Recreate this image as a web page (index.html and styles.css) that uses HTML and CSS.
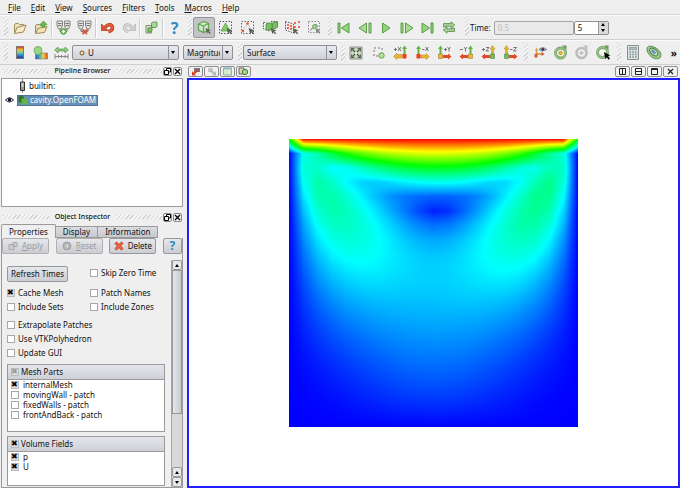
FILE: index.html
```html
<!DOCTYPE html>
<html lang="en">
<head>
    <meta charset="UTF-8">
    <meta name="viewport" content="width=device-width, initial-scale=1.0">
    <title>ParaView</title>
    <link rel="stylesheet" href="styles.css">
</head>
<body>
    <nav class="menubar">
        <a href="#"><u>F</u>ile</a>
        <a href="#"><u>E</u>dit</a>
        <a href="#"><u>V</u>iew</a>
        <a href="#"><u>S</u>ources</a>
        <a href="#"><u>F</u>ilters</a>
        <a href="#"><u>T</u>ools</a>
        <a href="#"><u>M</u>acros</a>
        <a href="#"><u>H</u>elp</a>
    </nav>

    <div class="toolbar">
        <div class="group">
            <span class="handle"></span>
            <button class="tool" title="Open"><svg width="14" height="14" viewBox="0 0 14 14"><path d="M1.500 12V4l1-1.500h3l1 1h4v2" fill="#efe3c0" stroke="#a08a55"/><path d="M1.500 12.500L4 6.500l9-2.500-2.500 7z" fill="#f8edc8" stroke="#a08a55"/></svg></button>
            <button class="tool" title="Save Data"><svg width="14" height="14" viewBox="0 0 14 14"><path d="M1.500 12V5l1-1.500h3l1 1h4v2" fill="#e8dcb8" stroke="#a08a55"/><path d="M1.500 12.500L4 7.500l9-2-2.500 6z" fill="#f3e3ae" stroke="#a08a55"/><path d="M8 6V3.500H6L9.500 0 13 3.500h-2V6z" fill="#6cc04a" stroke="#3f8f2c" stroke-width=".6"/></svg></button>
            <span class="sep"></span>
            <button class="tool" title="Connect"><svg width="15" height="15" viewBox="0 0 15 15"><path d="M1 1h5.500v4.500L5 9H2.500L1 5.500zM8.500 1H14v4.500L12.500 9H10L8.500 5.500z" fill="#e4e4de" stroke="#85857d"/><path d="M2 3.500h3.500M9.500 3.500H13M2 5.500h3.500M9.500 5.500H13M4 9v2.500h2M11 9v2.500H9" stroke="#777" fill="none"/><circle cx="7.500" cy="11.500" r="2.800" fill="#8ccc70" stroke="#4d9440"/><path d="M6 11.500h3M7.500 10v3" stroke="#fff"/></svg></button>
            <button class="tool" title="Disconnect"><svg width="15" height="15" viewBox="0 0 15 15"><path d="M1 1h5.500v4.500L5 9H2.500L1 5.500zM8.500 1H14v4.500L12.500 9H10L8.500 5.500z" fill="#e4e4de" stroke="#85857d"/><path d="M2 3.500h3.500M9.500 3.500H13M2 5.500h3.500M9.500 5.500H13M4 9v2.500h2M11 9v2.500H9" stroke="#777" fill="none"/><path d="M5.500 9.500l4.500 4.500M10 9.500L5.500 14" stroke="#d9573f" stroke-width="2"/></svg></button>
            <span class="sep"></span>
            <button class="tool" title="Undo"><svg width="14" height="14" viewBox="0 0 14 14"><path d="M4 6.500C7 2.500 11 3 11.500 6.500c0 2-1.500 3.500-4 4" fill="none" stroke="#a43418" stroke-width="3.500"/><path d="M.5 3v6.500H7z" fill="#e2532f" stroke="#a43418" stroke-width=".7"/><path d="M4 6.500C7 2.500 11 3 11.500 6.500c0 2-1.500 3.500-4 4" fill="none" stroke="#e65b38" stroke-width="2.200"/></svg></button>
            <button class="tool" title="Redo"><svg width="14" height="14" viewBox="0 0 14 14"><path d="M10 6.500C7 2.500 3 3 2.500 6.500c0 2 1.500 3.500 4 4" fill="none" stroke="#b2b2b2" stroke-width="3"/><path d="M13.500 3v6.500H7z" fill="#d2d2d2" stroke="#b2b2b2" stroke-width=".7"/><path d="M10 6.500C7 2.500 3 3 2.500 6.500c0 2 1.500 3.500 4 4" fill="none" stroke="#dcdcdc" stroke-width="1.600"/></svg></button>
            <span class="sep"></span>
            <button class="tool" title="Find Data"><svg width="13" height="13" viewBox="0 0 13 13"><path d="M1 4.500h5.500v7.500H1z" fill="#cfe2c5" stroke="#7c9270"/><path d="M6.500 2l1.500-1h4v4.500l-1 1H6.500z" fill="#a7d796" stroke="#4f8f40" stroke-width=".8"/><path d="M3 7h2.500l1.500-1v3.500L5.500 11H3z" fill="#83cb69" stroke="#3f7f30" stroke-width=".8"/></svg></button>
            <span class="sep"></span>
            <button class="tool help" title="Help">?</button>
        </div>
        <div class="group selection">
            <span class="handle"></span>
            <button class="tool pressed" title="Interact"><svg width="15" height="15" viewBox="0 0 15 15"><path d="M1.500 4L6.500 1.500l5 2V10l-5 2.500-5-2.500z" fill="#d2e6ca" stroke="#62a850" stroke-width="1.300"/><path d="M1.500 4l5 2 5-2.500M6.500 6v6.500" fill="none" stroke="#62a850" stroke-width="1.300"/><path d="M8.500 8l5.500 2.200-2.200.8 2 2-1 1-2-2-.8 2z" fill="#5d6855"/></svg></button>
            <button class="tool" title="Select Cells On"><svg width="16" height="16" viewBox="0 0 16 16"><path d="M1.500 1.500h12v12h-12z" fill="none" stroke="#555" stroke-dasharray="1.500 1.500"/><path d="M7.500 3l4.500 8H3z" fill="#86c970" stroke="#4c9b3b" stroke-width=".7"/><path d="M8.500 8l6 2.500-2.300.8 2 2-1 1-2-2-.8 2z" fill="#56614f"/></svg></button>
            <button class="tool" title="Select Points On"><svg width="16" height="16" viewBox="0 0 16 16"><path d="M1.500 1.500h12v12h-12z" fill="none" stroke="#666" stroke-dasharray="1.500 1.500"/><path d="M7.500 3.500L3 11M7.500 3.500L11 9" stroke="#ccc"/><circle cx="7.500" cy="3.500" r="1.200" fill="#e8512f"/><circle cx="3" cy="11" r="1.200" fill="#e8512f"/><path d="M8.500 8l6 2.500-2.300.8 2 2-1 1-2-2-.8 2z" fill="#56614f"/></svg></button>
            <button class="tool" title="Select Cells Through"><svg width="17" height="16" viewBox="0 0 17 16"><path d="M1.500 2l6 2v7l-6-2zM9 1.500h6.500v7" fill="none" stroke="#555" stroke-dasharray="1.500 1.200"/><path d="M4 4.500l2-1.500h4v6l-1 1H4zM10.500 3.500l1-1.500h4v5l-1.500 1.500h-3.500z" fill="#79c163" stroke="#468836" stroke-width=".7"/><path d="M8.500 8l6 2.500-2.300.8 2 2-1 1-2-2-.8 2z" fill="#56614f"/></svg></button>
            <button class="tool" title="Select Points Through"><svg width="17" height="16" viewBox="0 0 17 16"><path d="M1.500 1.500l8 2.500v9l-8-3z" fill="none" stroke="#555" stroke-dasharray="1.500 1.200"/><g fill="#e8452b"><circle cx="4" cy="5" r="1"/><circle cx="7" cy="6" r="1"/><circle cx="4" cy="8" r="1"/><circle cx="7" cy="9" r="1"/><circle cx="11" cy="3" r="1"/><circle cx="15" cy="2" r="1"/><circle cx="15" cy="7" r="1"/><circle cx="11" cy="7" r="1"/></g><path d="M8.500 8l6 2.500-2.300.8 2 2-1 1-2-2-.8 2z" fill="#56614f"/></svg></button>
            <button class="tool" title="Select Block"><svg width="15" height="15" viewBox="0 0 15 15"><path d="M1.500 1.500h11v11h-11z" fill="none" stroke="#888" stroke-dasharray="1.500 1.500"/><path d="M3 11l2-3 2 1M9 4l2 3" stroke="#888" fill="none"/><circle cx="7.500" cy="6.500" r="2" fill="#a6d596" stroke="#6ba45d"/><path d="M8.500 8l5 2-2.200.8 2 2-1 1-2-2-.8 2z" fill="#7f8779"/></svg></button>
        </div>
        <div class="group vcr">
            <span class="handle"></span>
            <button class="tool" title="First Frame"><svg width="13" height="12" viewBox="0 0 13 12"><path d="M1 1h2v10H1zM12 1v10L4.500 6z" fill="#90d676" stroke="#5a9a4a"/></svg></button>
            <button class="tool" title="Previous Frame"><svg width="14" height="12" viewBox="0 0 14 12"><path d="M11 1h2v10h-2zM8.500 1v10L1 6z" fill="#a6dd90" stroke="#5a9a4a"/></svg></button>
            <button class="tool" title="Play"><svg width="10" height="12" viewBox="0 0 10 12"><path d="M1.500 1v10L9 6z" fill="#90d676" stroke="#5a9a4a"/></svg></button>
            <button class="tool" title="Next Frame"><svg width="14" height="12" viewBox="0 0 14 12"><path d="M1 1h2v10H1zM5.500 1v10L13 6z" fill="#a6dd90" stroke="#5a9a4a"/></svg></button>
            <button class="tool" title="Last Frame"><svg width="13" height="12" viewBox="0 0 13 12"><path d="M10 1h2v10h-2zM1 1v10L8.500 6z" fill="#90d676" stroke="#5a9a4a"/></svg></button>
            <button class="tool" title="Loop"><svg width="14" height="13" viewBox="0 0 14 13"><path d="M1.500 6V2.500H9V.8L12.800 4 9 7V5.200H4V6zM12.500 7v3.500H5v1.700L1.200 9 5 6v1.800h5V7z" fill="#a9cf99" stroke="#5b8b4b" stroke-width=".8"/></svg></button>
        </div>
        <div class="group time">
            <span class="handle"></span>
            <label for="time">Time:</label>
            <input type="text" id="time" class="time-value" value="0.5" disabled>
            <div class="spin">
                <input type="text" id="timestep" aria-label="Time step" value="5">
                <div class="spin-buttons">
                    <button title="Up"><i class="arrow up"></i></button>
                    <button title="Down"><i class="arrow down"></i></button>
                </div>
            </div>
        </div>
    </div>

    <div class="toolbar">
        <div class="group">
            <span class="handle"></span>
            <button class="tool" title="Color Legend"><span class="legend"></span></button>
            <button class="tool" title="Edit Color Map"><svg width="15" height="14" viewBox="0 0 15 14"><defs><linearGradient id="rainbow"><stop offset="0" stop-color="#2856b8"/><stop offset=".35" stop-color="#3eb6c0"/><stop offset=".65" stop-color="#f4d03a"/><stop offset="1" stop-color="#d85020"/></linearGradient></defs><path d="M2.500 8.500h5v-1.500h7v6h-12z" fill="url(#rainbow)" stroke="#777" stroke-width=".6"/><circle cx="5" cy="4.500" r="4" fill="#9ad585" stroke="#63a852" stroke-width=".8"/></svg></button>
            <button class="tool" title="Rescale"><svg width="15" height="14" viewBox="0 0 15 14"><path d="M.7 4L4 1v2h7V1l3.300 3L11 7V5H4v2z" fill="#8fce7b" stroke="#55944a" stroke-width=".7"/><path d="M1 8v5M14 8v5M1 10.500h13M4.500 9v3M7.500 9v3M11 9v3" stroke="#888" fill="none"/></svg></button>
            <div class="combo variable">
                <svg class="point" width="6" height="6" viewBox="0 0 6 6"><circle cx="3" cy="3" r="2" fill="#fbe6b4" stroke="#6e5120"/></svg>
                <select aria-label="Variable"><option>U</option><option>p</option></select>
            </div>
            <div class="combo component">
                <select aria-label="Component"><option>Magnitude</option></select>
            </div>
        </div>
        <div class="group representation">
            <span class="handle"></span>
            <div class="combo surface">
                <select aria-label="Representation"><option>Surface</option><option>Wireframe</option></select>
            </div>
        </div>
        <div class="group camera">
            <span class="handle"></span>
            <button class="tool" title="Reset"><svg width="14" height="14" viewBox="0 0 14 14"><path d="M1 1h12v12H1z" fill="#cbd6c5" stroke="#777" stroke-width=".8"/><path d="M4 4l6 6M10 4l-6 6" stroke="#455040" stroke-width="1.200"/><path d="M2 2h4L2 6zM12 2v4L8 2zM2 12V8l4 4zM12 12H8l4-4z" fill="#5c6e52"/><circle cx="7" cy="7" r="1.500" fill="#e4eedf"/></svg></button>
            <button class="tool" title="Zoom To Box"><svg width="13" height="13" viewBox="0 0 13 13"><path d="M2 2h8v8H2z" fill="none" stroke="#777" stroke-dasharray="2 2"/><circle cx="9.500" cy="9.500" r="2.700" fill="#b8e1a8" stroke="#60a74c"/></svg></button>
            <button class="tool" title="+X"><svg width="15" height="15" viewBox="0 0 15 15"><path d="M10.500 9V4H9l2.500-3.500L14 4h-1.500v5z" fill="#62b548"/><path d="M9 11v-1.500H4V8L.5 11.500 4 14.500V13h5z" fill="#e9b52e" stroke="#9f7a22" stroke-width=".4"/><path d="M9.500 9h4v4.500h-4z" fill="#f03c14"/><path d="M1 4.500h3M2.500 3v3M5 2l3 4M8 2L5 6" stroke="#555" stroke-width=".8"/></svg></button>
            <button class="tool" title="-X"><svg width="15" height="15" viewBox="0 0 15 15"><path d="M2.500 9V4H1l2.500-3.500L6 4H4.500v5z" fill="#62b548"/><path d="M6 10h5V8.500l3.500 3-3.500 3V13H6z" fill="#e9b52e" stroke="#9f7a22" stroke-width=".4"/><path d="M1.500 9h4v4.500h-4z" fill="#f03c14"/><path d="M7 4.500h2.500M10.500 2l3 4M13.500 2l-3 4" stroke="#555" stroke-width=".8"/></svg></button>
            <button class="tool" title="+Y"><svg width="15" height="15" viewBox="0 0 15 15"><path d="M2.500 9V4H1l2.500-3.500L6 4H4.500v5z" fill="#62b548"/><path d="M6 10h5V8.500l3.500 3-3.500 3V13H6z" fill="#e2492b"/><path d="M1.500 9h4v4.500h-4z" fill="#efb52c" stroke="#97701a" stroke-width=".5"/><path d="M7 4.500h3M8.500 3v3M10.500 2L12 4l1.500-2M12 4v2.500" fill="none" stroke="#555" stroke-width=".8"/></svg></button>
            <button class="tool" title="-Y"><svg width="15" height="15" viewBox="0 0 15 15"><path d="M10.500 9V4H9l2.500-3.500L14 4h-1.500v5z" fill="#62b548"/><path d="M9 10H4V8.500l-3.500 3 3.500 3V13h5z" fill="#e2492b"/><path d="M9.500 9h4v4.500h-4z" fill="#efb52c" stroke="#97701a" stroke-width=".5"/><path d="M1 4.500h3M5 2l1.500 2L8 2M6.500 4v2.500" fill="none" stroke="#555" stroke-width=".8"/></svg></button>
            <button class="tool" title="+Z"><svg width="15" height="15" viewBox="0 0 15 15"><path d="M10.500 9V4H9l2.500-3.500L14 4h-1.500v5z" fill="#e9b52e" stroke="#9f7a22" stroke-width=".4"/><path d="M9 10H4V8.500l-3.500 3 3.500 3V13h5z" fill="#e2492b"/><path d="M9.500 9h4v4.500h-4z" fill="#74b957" stroke="#4a7c34" stroke-width=".5"/><path d="M1 4.500h3M2.500 3v3M5 2.500h3L5 6h3" fill="none" stroke="#555" stroke-width=".8"/></svg></button>
            <button class="tool" title="-Z"><svg width="15" height="15" viewBox="0 0 15 15"><path d="M2.500 9V4H1l2.500-3.500L6 4H4.500v5z" fill="#e9b52e" stroke="#9f7a22" stroke-width=".4"/><path d="M6 10h5V8.500l3.500 3-3.500 3V13H6z" fill="#e2492b"/><path d="M1.500 9h4v4.500h-4z" fill="#74b957" stroke="#4a7c34" stroke-width=".5"/><path d="M7 4.500h2.500M10.500 2.500h3l-3 3.500h3" fill="none" stroke="#555" stroke-width=".8"/></svg></button>
        </div>
        <div class="group center">
            <span class="handle"></span>
            <button class="tool" title="Show Orientation Axes"><svg width="14" height="13" viewBox="0 0 14 13"><path d="M3.500 8V4" stroke="#c9a040" stroke-width="1.600"/><path d="M2 4.500L3.500 1.500 5 4.500z" fill="#c9a040"/><path d="M3.500 8h6" stroke="#d6952c" stroke-width="1.600"/><path d="M8.500 6l3 2-3 2z" fill="#d05030"/><path d="M1.500 8h3v3.500h-3z" fill="#d8583a"/><path d="M6 3.500q3.500-3.500 7.500 0-4 3-7.500 0z" fill="#eef" stroke="#667"/><circle cx="9.800" cy="3.300" r="1.400" fill="#335"/></svg></button>
            <button class="tool" title="Show Center"><svg width="15" height="15" viewBox="0 0 15 15"><circle cx="7.500" cy="8" r="5" fill="#f6f6ee" stroke="#6a9a58" stroke-width="2.800"/><circle cx="7.500" cy="8" r="5" fill="none" stroke="#9cc48b" stroke-width="1.600"/><path d="M9 .5h4.500V5z" fill="#6a9a58"/><circle cx="7.500" cy="8" r="1.800" fill="#f2b826" stroke="#a0781a" stroke-width=".6"/></svg></button>
            <button class="tool" title="Reset Center" disabled><svg width="15" height="15" viewBox="0 0 15 15"><circle cx="7.500" cy="8" r="5" fill="#eee" stroke="#bdbdbd" stroke-width="2.600"/><path d="M9 .5h4.500V5z" fill="#bdbdbd"/><path d="M5.500 8h4M7.500 6v4" stroke="#bdbdbd" stroke-width="1.500"/></svg></button>
            <button class="tool" title="Pick Center"><svg width="16" height="15" viewBox="0 0 16 15"><circle cx="7.500" cy="7.500" r="5" fill="#f6f6ee" stroke="#6a9a58" stroke-width="2.800"/><circle cx="7.500" cy="7.500" r="5" fill="none" stroke="#9cc48b" stroke-width="1.600"/><path d="M9 .5h4.500V5z" fill="#6a9a58"/><path d="M9 7l6.500 3.500-2.500.6 2 2.400-1.300 1.200-2-2.500-1.400 2z" fill="#000"/></svg></button>
        </div>
        <div class="group filters">
            <span class="handle"></span>
            <button class="tool" title="Calculator"><svg width="12" height="15" viewBox="0 0 12 15"><path d="M.5.500h11v14H.5z" fill="#dce2e2" stroke="#84918f"/><path d="M2.500 2.500h7v2h-7z" fill="#a9c3c6" stroke="#78878a" stroke-width=".6"/><g stroke="#7b8c94" stroke-width="1.500" stroke-dasharray="1.500 1.250"><path d="M2.500 7h7"/><path d="M2.500 9.500h7"/><path d="M2.500 12h7"/></g></svg></button>
            <button class="tool" title="Contour"><svg width="16" height="15" viewBox="0 0 16 15"><path d="M1 4C1 .5 5 .5 9 2.500c4 2 7 6 5.500 9.500C13 15 8 14 5 11.500 2 9 1 6.500 1 4z" fill="#9cc78b" stroke="#5a8f50"/><ellipse cx="7.800" cy="7" rx="4.800" ry="2.800" transform="rotate(42 7.800 7)" fill="#c3dccb" stroke="#4c7c46"/><ellipse cx="7.500" cy="6.700" rx="2.800" ry="1.300" transform="rotate(42 7.500 6.700)" fill="#5f8fb3"/></svg></button>
        </div>
        <button class="more" title="More">»</button>
    </div>

    <main>
        <aside>
            <section class="dock pipeline">
                <header>
                    <span class="grip"></span><h2>Pipeline Browser</h2><span class="grip"></span>
                    <button class="mini" title="Float"><svg width="7" height="7" viewBox="0 0 7 7"><path d="M2.500 2.500v-2h4v3.500h-2M.5 2.500h4v4h-4z" fill="none" stroke="#000"/></svg></button>
                    <button class="mini" title="Close"><svg width="7" height="7" viewBox="0 0 7 7"><path d="M1 1l5 5M6 1L1 6" stroke="#000" stroke-width="1.300"/></svg></button>
                </header>
                <ul class="tree">
                    <li>
                        <span class="eye"></span>
                        <a href="#"><svg width="9" height="14" viewBox="0 0 9 14"><path d="M4.500 0v3M4.500 12v2" stroke="#888"/><path d="M2.500 3h4v8.500h-4z" fill="#999" stroke="#333"/><path d="M3.500 5h2M3.500 7h2" stroke="#fff"/></svg>builtin:</a>
                    </li>
                    <li>
                        <span class="eye"><svg width="9" height="6" viewBox="0 0 9 6"><path d="M.5 3q4-4.500 8 0-4 4-8 0z" fill="#dde" stroke="#223"/><circle cx="4.500" cy="2.800" r="1.700" fill="#112"/></svg></span>
                        <a href="#" class="selected"><svg width="10" height="10" viewBox="0 0 10 10"><path d="M.5 1.500L3 0l3 2v7L.5 7z" fill="#2e7326"/><path d="M3.500 3.500h6v6h-6z" fill="#62b548"/></svg>cavity.OpenFOAM</a>
                    </li>
                </ul>
            </section>

            <section class="dock inspector">
                <header>
                    <span class="grip"></span><h2>Object Inspector</h2><span class="grip"></span>
                    <button class="mini" title="Float"><svg width="7" height="7" viewBox="0 0 7 7"><path d="M2.500 2.500v-2h4v3.500h-2M.5 2.500h4v4h-4z" fill="none" stroke="#000"/></svg></button>
                    <button class="mini" title="Close"><svg width="7" height="7" viewBox="0 0 7 7"><path d="M1 1l5 5M6 1L1 6" stroke="#000" stroke-width="1.300"/></svg></button>
                </header>
                <div class="tabs">
                    <button class="active">Properties</button>
                    <button>Display</button>
                    <button>Information</button>
                </div>
                <div class="panel">
                    <div class="actions">
                        <button class="btn wide" disabled><svg width="10" height="10" viewBox="0 0 10 10"><path d="M1 3.500h5v5H1zM5 1.500h4v4H5z" fill="#ccc" stroke="#aaa"/></svg><span><u>A</u>pply</span></button>
                        <button class="btn wide" disabled><svg width="10" height="10" viewBox="0 0 10 10"><circle cx="5" cy="5" r="4" fill="#b4b4b4" stroke="#a2a2a2"/><path d="M3 5l3-2v4z" fill="#ddd"/></svg><span><u>R</u>eset</span></button>
                        <button class="btn wide"><svg width="10" height="10" viewBox="0 0 10 10"><path d="M1.500 1.500l7 7M8.500 1.500l-7 7" stroke="#c23a1c" stroke-width="3"/><path d="M1.500 1.500l7 7M8.500 1.500l-7 7" stroke="#f0694a" stroke-width="1.700"/></svg><span>Delete</span></button>
                        <button class="btn help" title="Help">?</button>
                    </div>
                    <div class="scroll">
                        <form class="properties">
                            <div class="row first">
                                <button type="button" class="btn">Refresh Times</button>
                                <label><input type="checkbox">Skip Zero Time</label>
                            </div>
                            <div class="row">
                                <label><input type="checkbox" checked>Cache Mesh</label>
                                <label><input type="checkbox">Patch Names</label>
                            </div>
                            <div class="row">
                                <label><input type="checkbox">Include Sets</label>
                                <label><input type="checkbox">Include Zones</label>
                            </div>
                            <div class="options">
                                <label><input type="checkbox">Extrapolate Patches</label>
                                <label><input type="checkbox">Use VTKPolyhedron</label>
                                <label><input type="checkbox">Update GUI</label>
                            </div>
                            <fieldset class="list mesh">
                                <label class="list-head partial"><input type="checkbox" checked>Mesh Parts</label>
                                <label><input type="checkbox" checked>internalMesh</label>
                                <label><input type="checkbox">movingWall - patch</label>
                                <label><input type="checkbox">fixedWalls - patch</label>
                                <label><input type="checkbox">frontAndBack - patch</label>
                            </fieldset>
                            <fieldset class="list fields">
                                <label class="list-head"><input type="checkbox" checked>Volume Fields</label>
                                <label><input type="checkbox" checked>p</label>
                                <label><input type="checkbox" checked>U</label>
                            </fieldset>
                        </form>
                        <div class="scrollbar">
                            <button title="Up"><i class="arrow up"></i></button>
                            <span class="thumb"></span>
                            <span class="track"></span>
                            <button title="Up"><i class="arrow up"></i></button>
                            <button title="Down"><i class="arrow down"></i></button>
                        </div>
                    </div>
                </div>
            </section>
        </aside>

        <section class="view">
            <header>
                <button class="view-tool" title="Undo Camera"><svg width="10" height="9" viewBox="0 0 10 9"><path d="M3 1h6v4H3z" fill="#777"/><path d="M1 4v4.500h4z" fill="#d64022"/><path d="M3 6.500l4-3.500" stroke="#d64022" stroke-width="1.800"/></svg></button>
                <button class="view-tool" title="Redo Camera"><svg width="10" height="9" viewBox="0 0 10 9"><path d="M1 1h5v4H1z" fill="#c6c6c6"/><path d="M9 4v4.500H5z" fill="#b5b5b5"/><path d="M7 6.500L3 3" stroke="#b5b5b5" stroke-width="1.800"/></svg></button>
                <button class="view-tool" title="Lookmark"><svg width="9" height="9" viewBox="0 0 9 9"><path d="M.5 1h8v7h-8z" fill="#d5eccd" stroke="#9aa"/><path d="M1 1.500h7" stroke="#84b7c7" stroke-width="1.500"/></svg></button>
                <button class="view-tool" title="Camera"><svg width="11" height="9" viewBox="0 0 11 9"><path d="M1 1h5v6H1z" fill="#dcd6c2" stroke="#665"/><circle cx="7" cy="5" r="2.700" fill="#a5d58f" stroke="#458234"/></svg></button>
                <span class="spacer"></span>
                <button class="view-tool" title="Split Horizontal"><svg width="7" height="7" viewBox="0 0 7 7"><path d="M.5.500h6v6h-6zM3.500.500v6" fill="none" stroke="#222"/></svg></button>
                <button class="view-tool" title="Split Vertical"><svg width="7" height="7" viewBox="0 0 7 7"><path d="M.5.500h6v6h-6zM.5 3.500h6" fill="none" stroke="#222"/></svg></button>
                <button class="view-tool" title="Maximize"><svg width="7" height="7" viewBox="0 0 7 7"><path d="M.5.500h6v6h-6zM.5 1.500h6" fill="none" stroke="#222"/></svg></button>
                <button class="view-tool" title="Close"><svg width="7" height="7" viewBox="0 0 7 7"><path d="M1 1l5 5M6 1L1 6" stroke="#222" stroke-width="1.200"/></svg></button>
            </header>
            <div class="render">
                <canvas id="field" width="288" height="288"></canvas>
            </div>
        </section>
    </main>

    <script src="cavity.js"></script>
</body>
</html>
```
FILE: styles.css
```css
* {
    box-sizing: border-box;
}
body {
    font-family: "Noto Sans", "Open Sans", sans-serif;
    font-size: 8px;
    line-height: 10px;
    margin: 0;
    height: 100vh;
    display: flex;
    flex-direction: column;
    background: #efefef;
    color: #111;
}
button, input, select {
    font: inherit;
    color: inherit;
    margin: 0;
    padding: 0;
}
svg {
    display: block;
    flex: none;
}
h2 {
    font-size: 7px;
    font-weight: 500;
    margin: 0;
}

/* menu */
.menubar {
    display: flex;
    gap: 10px;
    padding: 3px 8px 1px;
    border-bottom: 1px solid #d6d6d6;
}
.menubar a {
    color: #111;
    text-decoration: none;
}

/* toolbars */
.toolbar {
    display: flex;
    align-items: center;
    height: 25px;
    padding-left: 4px;
    border-bottom: 1px solid #cfcfcf;
    border-top: 1px solid #fafafa;
}
.group {
    display: flex;
    align-items: center;
}
.handle {
    width: 4px;
    height: 19px;
    margin-right: 1px;
    background: repeating-linear-gradient(135deg, #d2d2d2 0 1px, #f4f4f4 1px 3px);
}
.sep {
    width: 2px;
    height: 20px;
    border-left: 1px solid #cdcdcd;
    border-right: 1px solid #fff;
}
.tool {
    width: 21px;
    height: 21px;
    display: flex;
    align-items: center;
    justify-content: center;
    background: none;
    border: 1px solid transparent;
}
.selection .tool, .camera .tool {
    width: 22px;
}
.tool.pressed {
    background: #c3c3c7;
    border-color: #96969a;
    border-radius: 2px;
}
.tool.help, .btn.help {
    color: #2b8cc4;
    font-size: 16px;
    font-weight: 700;
}
.selection {
    margin-left: 3px;
}
.vcr {
    margin-left: 3px;
}
.time {
    margin-left: 6px;
}
.time-value {
    width: 80px;
    height: 14px;
    margin-left: 3px;
    padding: 0 3px;
    border: 1px solid #a4a4a4;
    border-radius: 2px;
    background: #e9e9e9;
    color: #bcbcbc;
}
.spin {
    display: flex;
    width: 35px;
    height: 14px;
    border: 1px solid #8f8f8f;
    border-radius: 2px;
    background: #fff;
}
.spin input {
    width: 23px;
    border: none;
    padding-left: 3px;
    background: none;
}
.spin-buttons {
    flex: 1;
    display: flex;
    flex-direction: column;
    border-left: 1px solid #999;
}
.spin-buttons button {
    flex: 1;
    display: flex;
    align-items: center;
    justify-content: center;
    border: none;
    background: #d9dade;
}
.arrow {
    border: 2px solid transparent;
}
.arrow.up {
    border-top: none;
    border-bottom: 3px solid #000;
}
.arrow.down {
    border-bottom: none;
    border-top: 3px solid #000;
}
.legend {
    width: 8px;
    height: 13px;
    border: 1px solid #777;
    background: linear-gradient(#d63a1c, #f5c22c, #6fcf9a, #2b8ac8, #2035a0);
}
.combo {
    position: relative;
    height: 15px;
    border: 1px solid #8d8f94;
    border-radius: 2px;
    background: linear-gradient(#e9eaee, #cfd1d7);
}
.combo select {
    appearance: none;
    width: 100%;
    height: 100%;
    padding: 0 12px 0 3px;
    border: none;
    background: none;
}
.combo::after {
    content: "";
    position: absolute;
    right: 3px;
    top: 5px;
    border: 2px solid transparent;
    border-top: 3px solid #000;
    border-bottom: none;
}
.combo::before {
    content: "";
    position: absolute;
    right: 9px;
    top: 0;
    bottom: 0;
    border-left: 1px solid #8d8f94;
}
.point {
    position: absolute;
    left: 6px;
    top: 4px;
}
.variable {
    width: 107px;
}
.variable select {
    padding-left: 15px;
}
.component {
    width: 50px;
    margin-left: 4px;
}
.representation {
    margin-left: 5px;
}
.camera {
    margin-left: 4px;
}
.surface {
    width: 94px;
}
.camera .handle {
    margin-right: 0;
}
.center {
    margin-left: 3px;
}
.filters {
    margin-left: 4px;
}
.more {
    margin-left: auto;
    padding: 0 3px;
    border: none;
    background: none;
    font-size: 10px;
    font-weight: 700;
}

/* left docks */
main {
    flex: 1;
    display: flex;
    min-height: 0;
}
aside {
    width: 183px;
    display: flex;
    flex-direction: column;
    gap: 4px;
    margin-right: 4px;
}
.dock header {
    display: flex;
    align-items: center;
    height: 12px;
    padding: 0 1px 0 3px;
}
.dock h2 {
    padding: 0 6px;
}
.grip {
    flex: 1;
    height: 4px;
    background: repeating-linear-gradient(135deg, #d2d2d2 0 1px, #f4f4f4 1px 3px);
}
.mini {
    display: flex;
    align-items: center;
    justify-content: center;
    width: 9px;
    height: 9px;
    margin-left: 1px;
    border: 1px solid #888;
    border-radius: 2px;
    background: #f4f4f4;
}
.pipeline {
    height: 142px;
    display: flex;
    flex-direction: column;
}
.tree {
    flex: 1;
    list-style: none;
    margin: 1px 0 0 1px;
    padding: 0 1px;
    border: 1px solid #9c9c9c;
    background: #fff;
}
.tree li {
    display: flex;
    align-items: center;
    height: 14px;
}
.eye {
    width: 14px;
    padding-left: 2px;
}
.tree a {
    display: flex;
    align-items: center;
    gap: 2px;
    height: 11px;
    padding: 0 2px 0 1px;
    color: #111;
    text-decoration: none;
}
.tree a.selected {
    background: #6590b8;
    border: 1px solid #4d749a;
    color: #fff;
    padding: 0 1px 0 0;
}
.inspector {
    flex: 1;
    display: flex;
    flex-direction: column;
    min-height: 0;
}
.tabs {
    display: flex;
    align-items: flex-end;
    height: 14px;
    padding-left: 1px;
    margin-top: 1px;
}
.tabs button {
    height: 12px;
    padding: 0 7px;
    border: 1px solid #9a9a9a;
    border-left: none;
    background: linear-gradient(#dcdde1, #c6c8ce);
}
.tabs button.active {
    height: 14px;
    border: 1px solid #9a9a9a;
    border-bottom: none;
    border-radius: 2px 2px 0 0;
    background: #efefef;
}
.panel {
    flex: 1;
    display: flex;
    flex-direction: column;
    min-height: 0;
    margin-left: 1px;
    border: 1px solid #9a9a9a;
    border-top: none;
}
.actions {
    display: flex;
    justify-content: space-between;
}
.btn {
    display: flex;
    align-items: center;
    justify-content: center;
    gap: 4px;
    height: 16px;
    padding: 0 3px;
    border: 1px solid #96989d;
    border-radius: 2px;
    background: linear-gradient(#e6e7eb, #cbcdd3);
}
.btn.wide {
    width: 47px;
}
.btn.help {
    width: 19px;
    font-size: 12px;
}
.btn:disabled {
    color: #9b9b9b;
    border-color: #b0b0b0;
}
.scroll {
    flex: 1;
    display: flex;
    min-height: 0;
    margin-top: 6px;
    overflow: hidden;
}
.properties {
    flex: 1;
    padding: 6px 6px 0 5px;
}
.properties label {
    display: flex;
    align-items: center;
    gap: 3px;
    height: 14px;
}
.row {
    display: grid;
    grid-template-columns: 83px 1fr;
}
.row.first {
    margin-bottom: 4px;
}
.row .btn {
    justify-self: start;
}
.options {
    margin-top: 4px;
}
input[type=checkbox] {
    appearance: none;
    flex: none;
    width: 8px;
    height: 8px;
    border: 1px solid #a8a8a8;
    background: #fff;
}
input[type=checkbox]:checked {
    background: #ddd;
    border-color: #bbb;
}
input[type=checkbox]:checked::before {
    content: "✖";
    display: block;
    font: 8px/6px "DejaVu Sans", sans-serif;
    color: #000;
    margin-left: -1px;
}
.list {
    margin: 0;
    padding: 0;
    min-width: 0;
    border: 1px solid #9a9a9a;
    background: #fff;
}
.mesh {
    height: 68px;
    margin-top: 4px;
}
.fields {
    height: 50px;
    margin-top: 4px;
}
.properties .list label {
    height: 10px;
    gap: 4px;
    padding-left: 3px;
}
.properties .list .list-head {
    height: 15px;
    gap: 2px;
    border-bottom: 1px solid #9a9a9a;
    background: linear-gradient(#e4e6ea, #cdd0d6);
}
.partial input[type=checkbox]:checked::before {
    color: #999;
}
.scrollbar {
    width: 11px;
    display: flex;
    flex-direction: column;
    background: #d8d8d8;
    border-left: 1px solid #a5a5a5;
}
.scrollbar button {
    height: 10px;
    display: flex;
    align-items: center;
    justify-content: center;
    border: 1px solid #96989d;
    border-radius: 2px;
    background: #e8e9ec;
}
.thumb {
    flex: 143;
    border: 1px solid #96989d;
    background: linear-gradient(90deg, #e6e7eb, #c8cad0);
}
.track {
    flex: 53;
}

/* render view */
.view {
    flex: 1;
    display: flex;
    flex-direction: column;
    min-width: 0;
}
.view header {
    display: flex;
    align-items: center;
    gap: 1px;
    height: 13px;
    padding: 0 2px 0 1px;
}
.view-tool {
    display: flex;
    align-items: center;
    justify-content: center;
    width: 15px;
    height: 11px;
    border: 1px solid #8e8e8e;
    border-radius: 2px;
    background: #f1f1f1;
}
.spacer {
    flex: 1;
}
.render {
    flex: 1;
    min-height: 0;
    display: flex;
    align-items: center;
    justify-content: center;
    border: 2px solid #1f1fff;
    background: #fff;
}
#field {
    height: 71%;
    aspect-ratio: 1;
}
```
FILE: cavity.js
```javascript
// Lid driven cavity, Re = 10, stream function / vorticity on a 40 x 40 grid
const N = 40;
const Re = 10;
const h = 1 / N;
const W = N + 1;
let psi = new Float64Array(W * W);
let om = new Float64Array(W * W);

function at(i, j) {
    return j * W + i;
}

function solve() {
    for (let it = 0; it < 3000; it++) {
        for (let j = 1; j < N; j++) {
            for (let i = 1; i < N; i++) {
                let k = at(i, j);
                let p = (psi[k - 1] + psi[k + 1] + psi[k - W] + psi[k + W] + h * h * om[k]) / 4;
                psi[k] += 1.5 * (p - psi[k]);
            }
        }
        // wall vorticity, j = N is the moving lid
        for (let n = 1; n < N; n++) {
            let b = at(n, 0), t = at(n, N), l = at(0, n), r = at(N, n);
            om[b] += 0.3 * (-2 * psi[b + W] / (h * h) - om[b]);
            om[t] += 0.3 * (-2 * psi[t - W] / (h * h) - 2 / h - om[t]);
            om[l] += 0.3 * (-2 * psi[l + 1] / (h * h) - om[l]);
            om[r] += 0.3 * (-2 * psi[r - 1] / (h * h) - om[r]);
        }
        for (let j = 1; j < N; j++) {
            for (let i = 1; i < N; i++) {
                let k = at(i, j);
                let u = (psi[k + W] - psi[k - W]) / (2 * h);
                let v = -(psi[k + 1] - psi[k - 1]) / (2 * h);
                let conv = u * (om[k + 1] - om[k - 1]) + v * (om[k + W] - om[k - W]);
                om[k] = (om[k - 1] + om[k + 1] + om[k - W] + om[k + W] - Re * h / 2 * conv) / 4;
            }
        }
    }
}

// velocity at a cell centre of the 20 x 20 mesh
function cell(i, j) {
    let k = at(2 * i + 1, 2 * j + 1);
    return [(psi[k + W] - psi[k - W]) / (2 * h), -(psi[k + 1] - psi[k - 1]) / (2 * h)];
}

// velocity magnitude at the mesh points
function pointValues() {
    let M = 20;
    let mag = [];
    for (let j = 0; j <= M; j++) {
        mag.push([]);
        for (let i = 0; i <= M; i++) {
            let side = i === 0 || i === M;
            if (j === M) {
                mag[j].push(side ? 0.5 : 1);
            } else if (side || j === 0) {
                mag[j].push(0);
            } else {
                let u = 0, v = 0;
                for (let c of [cell(i, j), cell(i - 1, j), cell(i, j - 1), cell(i - 1, j - 1)]) {
                    u += c[0] / 4;
                    v += c[1] / 4;
                }
                mag[j].push(Math.hypot(u, v));
            }
        }
    }
    return mag;
}

// blue - cyan - green - yellow - red
function color(s) {
    let c = x => 255 * Math.max(0, Math.min(1, x));
    return [c(4 * s - 2), c(s < 0.5 ? 4 * s : 4 - 4 * s), c(2 - 4 * s)];
}

function draw() {
    let canvas = document.getElementById("field");
    let ctx = canvas.getContext("2d");
    let size = canvas.width;
    let img = ctx.createImageData(size, size);
    let mag = pointValues();
    for (let y = 0; y < size; y++) {
        for (let x = 0; x < size; x++) {
            let gx = (x + 0.5) / size * 20;
            let gy = 20 - (y + 0.5) / size * 20;
            let i = Math.floor(gx), j = Math.floor(gy);
            let fx = gx - i, fy = gy - j;
            let s = (mag[j][i] * (1 - fx) + mag[j][i + 1] * fx) * (1 - fy)
                + (mag[j + 1][i] * (1 - fx) + mag[j + 1][i + 1] * fx) * fy;
            let rgb = color(s);
            img.data.set([rgb[0], rgb[1], rgb[2], 255], (y * size + x) * 4);
        }
    }
    ctx.putImageData(img, 0, 0);
}

solve();
draw();
```
